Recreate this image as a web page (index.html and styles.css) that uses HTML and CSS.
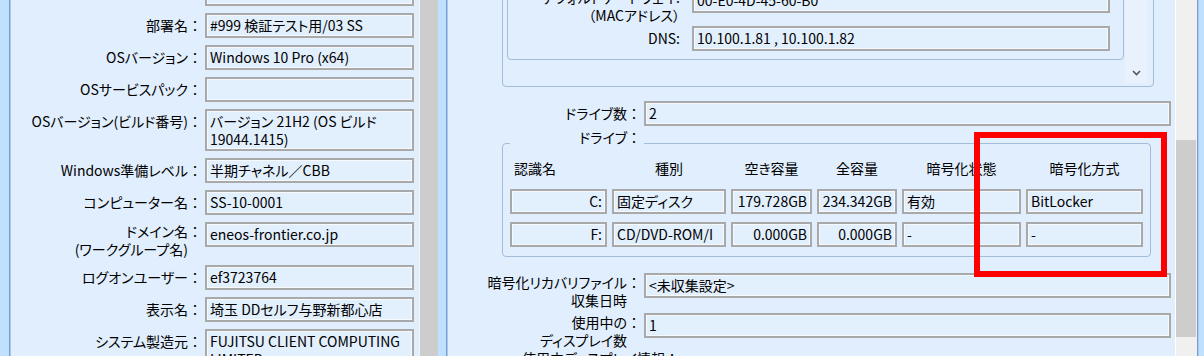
FILE: index.html
```html
<!DOCTYPE html>
<html lang="ja">
<head>
  <meta charset="UTF-8" />
  <meta name="viewport" content="width=device-width, initial-scale=1.0" />
  <title>端末詳細情報</title>
  <link rel="stylesheet" href="styles.css">
</head>
<body>
  <div class="window">
    <div class="frame-edge"></div>

    <div class="pane pane-left">
      <div class="rows">
        <div class="row"><div class="lbl"></div><div class="colon"></div><div class="val"></div></div>
        <div class="row"><div class="lbl">部署名</div><div class="colon">：</div><div class="val">#999 検証テスト用/03 SS</div></div>
        <div class="row"><div class="lbl">OSバージョン</div><div class="colon">：</div><div class="val">Windows 10 Pro (x64)</div></div>
        <div class="row"><div class="lbl">OSサービスパック</div><div class="colon">：</div><div class="val"></div></div>
        <div class="row"><div class="lbl">OSバージョン(ビルド番号)</div><div class="colon">：</div><div class="val tall">バージョン 21H2 (OS ビルド<br>19044.1415)</div></div>
        <div class="row"><div class="lbl">Windows準備レベル</div><div class="colon">：</div><div class="val">半期チャネル／CBB</div></div>
        <div class="row"><div class="lbl">コンピューター名</div><div class="colon">：</div><div class="val">SS-10-0001</div></div>
        <div class="row two-line"><div class="lbl">ドメイン名<br>(ワークグループ名)</div><div class="colon">：</div><div class="val">eneos-frontier.co.jp</div></div>
        <div class="row"><div class="lbl">ログオンユーザー</div><div class="colon">：</div><div class="val">ef3723764</div></div>
        <div class="row"><div class="lbl">表示名</div><div class="colon">：</div><div class="val">埼玉 DDセルフ与野新都心店</div></div>
        <div class="row"><div class="lbl">システム製造元</div><div class="colon">：</div><div class="val tall">FUJITSU CLIENT COMPUTING<br>LIMITED</div></div>
      </div>
    </div>

    <div class="scrollbar-left"></div>
    <div class="frame-gap"></div>

    <div class="pane pane-right">
      <div class="net-box">
        <div class="net-inner">
          <div class="net-row two-line">
            <div class="lbl">デフォルトゲートウェイ:<br>（MACアドレス）</div>
            <div class="val">00-E0-4D-45-60-B0</div>
          </div>
          <div class="net-row">
            <div class="lbl">DNS:</div>
            <div class="val">10.100.1.81 , 10.100.1.82</div>
          </div>
        </div>
        <div class="vscroll">
          <svg class="chevron" width="9" height="6" viewBox="0 0 9 6"><polyline points="1,1 4.5,4.5 8,1" fill="none" stroke="#555" stroke-width="1.6"/></svg>
        </div>
      </div>

      <div class="row drive-count"><div class="lbl">ドライブ数</div><div class="colon">：</div><div class="val">2</div></div>

      <fieldset class="group drives">
        <legend><span class="legend-text">ドライブ<span class="colon">：</span></span></legend>
        <div class="drive-grid">
          <div class="th th-left">認識名</div>
          <div class="th">種別</div>
          <div class="th">空き容量</div>
          <div class="th">全容量</div>
          <div class="th">暗号化状態</div>
          <div class="th">暗号化方式</div>

          <div class="cell num">C:</div>
          <div class="cell">固定ディスク</div>
          <div class="cell num">179.728GB</div>
          <div class="cell num">234.342GB</div>
          <div class="cell">有効</div>
          <div class="cell">BitLocker</div>

          <div class="cell num">F:</div>
          <div class="cell">CD/DVD-ROM/I</div>
          <div class="cell num">0.000GB</div>
          <div class="cell num">0.000GB</div>
          <div class="cell">-</div>
          <div class="cell">-</div>
        </div>
      </fieldset>

      <div class="row two-line recovery"><div class="lbl">暗号化リカバリファイル<br>収集日時</div><div class="colon">：</div><div class="val">&lt;未収集設定&gt;</div></div>
      <div class="row two-line displays-count"><div class="lbl">使用中の<br>ディスプレイ数</div><div class="colon">：</div><div class="val">1</div></div>

      <fieldset class="group displays">
        <legend><span class="legend-text">使用中ディスプレイ情報<span class="colon">：</span></span></legend>
        <div class="drive-grid">
          <div class="cell"></div>
        </div>
      </fieldset>
    </div>

    <div class="scrollbar-right"><div class="thumb"></div></div>
    <div class="frame-edge frame-edge-right"></div>
  </div>

  <div class="highlight"></div>
</body>
</html>
```

FILE: styles.css
```css
body {
  margin: 0;
  position: relative;
  font-family: "Noto Sans CJK JP", "Noto Sans", sans-serif;
  font-size: 14px;
  line-height: 18px;
  color: #000;
  font-feature-settings: "palt";
}
.window {
  display: flex;
  width: 1204px;
  height: 356px;
  overflow: hidden;
}
.frame-edge {
  width: 11px;
  flex-shrink: 0;
  background: linear-gradient(to right, #bfe0ff 9px, #7a9fcf 9px, #7a9fcf 10px, #a9c9ee 10px);
}
.frame-edge-right {
  flex: 1;
  background: linear-gradient(to right, #7a9fcf 1px, #a9c9ee 1px, #a9c9ee 2px, #bfe0ff 2px);
}
.frame-gap {
  width: 10px;
  flex-shrink: 0;
  background: linear-gradient(to right, #bfe0ff 8px, #7a9fcf 8px, #7a9fcf 9px, #a9c9ee 9px);
}
.pane {
  background: #e0eefd;
  flex-shrink: 0;
  display: flex;
  flex-direction: column;
}
.pane-left {
  width: 408px;
}
.pane-right {
  width: 727px;
}
.scrollbar-left {
  width: 19px;
  flex-shrink: 0;
  background: linear-gradient(to right, #f2f2f2 1px, #cdcdcd 1px);
}
.scrollbar-right {
  width: 21px;
  flex-shrink: 0;
  border-left: 1px solid #fff;
  background: #f0f0f0;
}
.scrollbar-right .thumb {
  margin-top: 140px;
  width: 20px;
  height: 197px;
  background: #cdcdcd;
}

/* label / value rows */
.rows {
  display: flex;
  flex-direction: column;
  gap: 7px;
  margin-top: -19px;
}
.row {
  display: flex;
  align-items: flex-start;
}
.lbl {
  text-align: right;
  white-space: nowrap;
  padding-top: 3px;
}
.colon {
  width: 14px;
  margin-right: 3px;
  padding-top: 3px;
  text-align: center;
  font-feature-settings: normal;
}
.two-line .lbl,
.two-line .colon {
  padding-top: 0;
}
.val,
.cell {
  box-sizing: border-box;
  height: 25px;
  padding: 1px 3px 0;
  border: 2px solid #a9a9a9;
  box-shadow: inset 0 0 0 1px #f6faff;
  background: #e2effd;
  white-space: nowrap;
  overflow: hidden;
}
.val.tall {
  height: 42px;
  white-space: normal;
}
.pane-left .lbl {
  width: 177px;
}
.pane-left .val {
  width: 209px;
}
.pane-right .row .lbl {
  width: 179px;
}
.pane-right .row .val {
  width: 527px;
}

/* network group */
.net-box {
  display: flex;
  width: 652px;
  box-sizing: border-box;
  margin: -26px 0 0 54px;
  padding: 4px 6px 3px 4px;
  border: 1px solid #a3bcda;
  border-radius: 4px;
}
.net-inner {
  width: 617px;
  box-sizing: border-box;
  margin-bottom: 23px;
  padding: 8px 13px 8px 0;
  border: 1px solid #a3bcda;
  border-radius: 4px;
  display: flex;
  flex-direction: column;
  gap: 2px;
}
.net-row {
  display: flex;
  align-items: flex-start;
}
.net-row .lbl {
  width: 172px;
  margin-right: 12px;
}
.net-row .val {
  width: 418px;
}
.vscroll {
  width: 22px;
  margin-left: 1px;
  background: #e9f2fc;
  display: flex;
  align-items: flex-end;
  justify-content: center;
}
.chevron {
  margin-bottom: 7px;
}

.drive-count {
  margin-top: 14px;
}

/* group boxes */
.group {
  box-sizing: border-box;
  width: 649px;
  min-width: 0;
  margin: 2px 0 0 54px;
  padding: 0 7px 9px;
  border: 1px solid #a3bcda;
  border-radius: 4px;
}
.group legend {
  padding: 0 0 12px;
  text-align: left;
}
.legend-text {
  display: block;
  box-sizing: border-box;
  width: 134px;
  padding-right: 3px;
  text-align: right;
  white-space: nowrap;
}
.legend-text .colon {
  display: inline-block;
  padding-top: 0;
  margin-right: 0;
}
.drive-grid {
  display: grid;
  grid-template-columns: 97px 114px 81px 80px 119px 117px;
  column-gap: 5px;
  row-gap: 8px;
}
.th {
  height: 23px;
  line-height: 20px;
  text-align: center;
  white-space: nowrap;
}
.th-left {
  text-align: left;
  padding-left: 4px;
}
.cell.num {
  text-align: right;
}

.recovery {
  margin-top: 16px;
}
.displays-count {
  margin-top: 4px;
}
.group.displays {
  margin-top: 0;
}
.group.displays legend {
  margin-left: 12px;
}
.group.displays .legend-text {
  width: auto;
  text-align: left;
}

.highlight {
  position: absolute;
  left: 974px;
  top: 132px;
  width: 193px;
  height: 145px;
  box-sizing: border-box;
  border: 6px solid #ff0000;
}
```
